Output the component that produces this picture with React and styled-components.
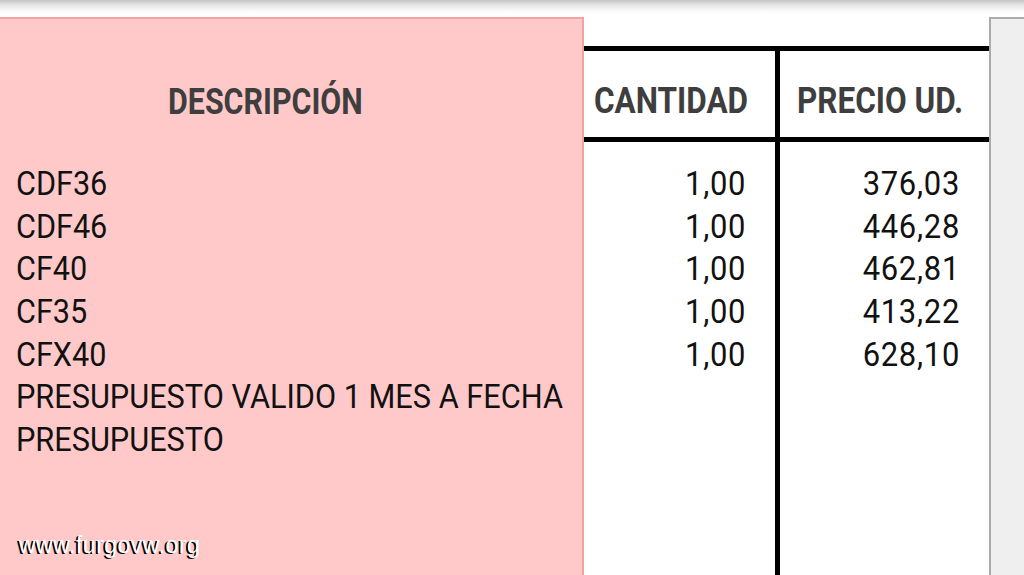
import React from 'react'
import styled, { createGlobalStyle } from 'styled-components'

const GlobalStyle = createGlobalStyle`
  html, body {
    margin: 0;
    padding: 0;
    background: #fff;
  }
  body {
    width: 1024px;
    height: 575px;
    overflow: hidden;
    font-family: Roboto, "Liberation Sans", sans-serif;
  }
`

const Page = styled.div`
  display: flex;
  flex-flow: column;
  width: 1024px;
  height: 575px;
  overflow: hidden;
`

const TopShade = styled.div`
  height: 17px;
  flex: none;
  background: linear-gradient(to bottom, #c4c4c4 0px, #e6e6e6 5px, #fafafa 11px, #fff 15px);
`

const Sheet = styled.div`
  display: flex;
  flex: 1;
  min-height: 0;
`

const DescPanel = styled.div`
  position: relative;
  width: 582px;
  flex: none;
  background: #ffc9c9;
  border-top: 2px solid #f2a2a2;
  border-right: 2px solid #f2a2a2;
  display: flex;
  flex-flow: column;
`

// condensed face: Roboto squeezed horizontally
const Narrow = styled.span`
  display: inline-block;
  white-space: nowrap;
  letter-spacing: ${p => p.$track || 0}px;
  transform: scaleX(${p => p.$scale || 0.875});
  transform-origin: ${p => (p.$right ? 'right' : 'left')} center;
`

const HeadText = styled.div`
  font-weight: 700;
  font-size: 36px;
  line-height: 42px;
  color: #3e3e3e;
  white-space: nowrap;
`

const DescHead = styled(HeadText)`
  margin-top: 62px;
  padding-left: 168px;
`

const Lines = styled.div`
  margin-top: 39px;
  padding-left: 16px;
`

const Line = styled.div`
  font-size: 34px;
  line-height: 42.67px;
  color: #111;
  text-align: ${p => p.$align || 'left'};
  white-space: nowrap;
`

const Table = styled.div`
  flex: 1;
  display: flex;
  flex-flow: column;
  padding-top: 29px;
`

const Grid = styled.div`
  display: grid;
  grid-template-columns: 191px 5px 1fr;
`

const HeaderGrid = styled(Grid)`
  height: 86px;
  border-top: 5px solid #000;
  border-bottom: 5px solid #000;
`

const BodyGrid = styled(Grid)`
  flex: 1;
`

const Divider = styled.div`
  background: #000;
`

const HeadCell = styled.div`
  padding-top: 29px;
  padding-left: ${p => p.$left}px;
`

const BodyCell = styled.div`
  padding-top: 20px;
  padding-right: 29px;
`

const SideStrip = styled.div`
  width: 33px;
  flex: none;
  background: #efefef;
  border-top: 2px solid #ababab;
  border-left: 2px solid #ababab;
`

const Watermark = styled.div`
  position: absolute;
  left: 19px;
  bottom: 16px;
  font-family: "Liberation Sans", Arial, sans-serif;
  font-size: 23px;
  letter-spacing: 0.5px;
  color: #fff;
  text-shadow: -2px 1px 0 #000;
`

const items = [
  { desc: 'CDF36', qty: '1,00', price: '376,03' },
  { desc: 'CDF46', qty: '1,00', price: '446,28' },
  { desc: 'CF40', qty: '1,00', price: '462,81' },
  { desc: 'CF35', qty: '1,00', price: '413,22' },
  { desc: 'CFX40', qty: '1,00', price: '628,10' },
]

const notes = ['PRESUPUESTO VALIDO 1 MES A FECHA', 'PRESUPUESTO']

export default function App() {
  return (
    <Page>
      <GlobalStyle />
      <TopShade />
      <Sheet>
        <DescPanel>
          <DescHead><Narrow $scale={0.845}>DESCRIPCIÓN</Narrow></DescHead>
          <Lines>
            {items.map(i => <Line key={i.desc}><Narrow $scale={0.9}>{i.desc}</Narrow></Line>)}
            {notes.map(n => <Line key={n}><Narrow $scale={0.903}>{n}</Narrow></Line>)}
          </Lines>
          <Watermark>www.furgovw.org</Watermark>
        </DescPanel>
        <Table>
          <HeaderGrid>
            <HeadCell $left={10}><HeadText><Narrow>CANTIDAD</Narrow></HeadText></HeadCell>
            <Divider />
            <HeadCell $left={17}><HeadText><Narrow>PRECIO UD.</Narrow></HeadText></HeadCell>
          </HeaderGrid>
          <BodyGrid>
            <BodyCell>
              {items.map(i => (
                <Line key={i.desc} $align="right">
                  <Narrow $right $scale={0.91} $track={0.8}>{i.qty}</Narrow>
                </Line>
              ))}
            </BodyCell>
            <Divider />
            <BodyCell>
              {items.map(i => (
                <Line key={i.desc} $align="right">
                  <Narrow $right $scale={0.91} $track={0.8}>{i.price}</Narrow>
                </Line>
              ))}
            </BodyCell>
          </BodyGrid>
        </Table>
        <SideStrip />
      </Sheet>
    </Page>
  )
}
